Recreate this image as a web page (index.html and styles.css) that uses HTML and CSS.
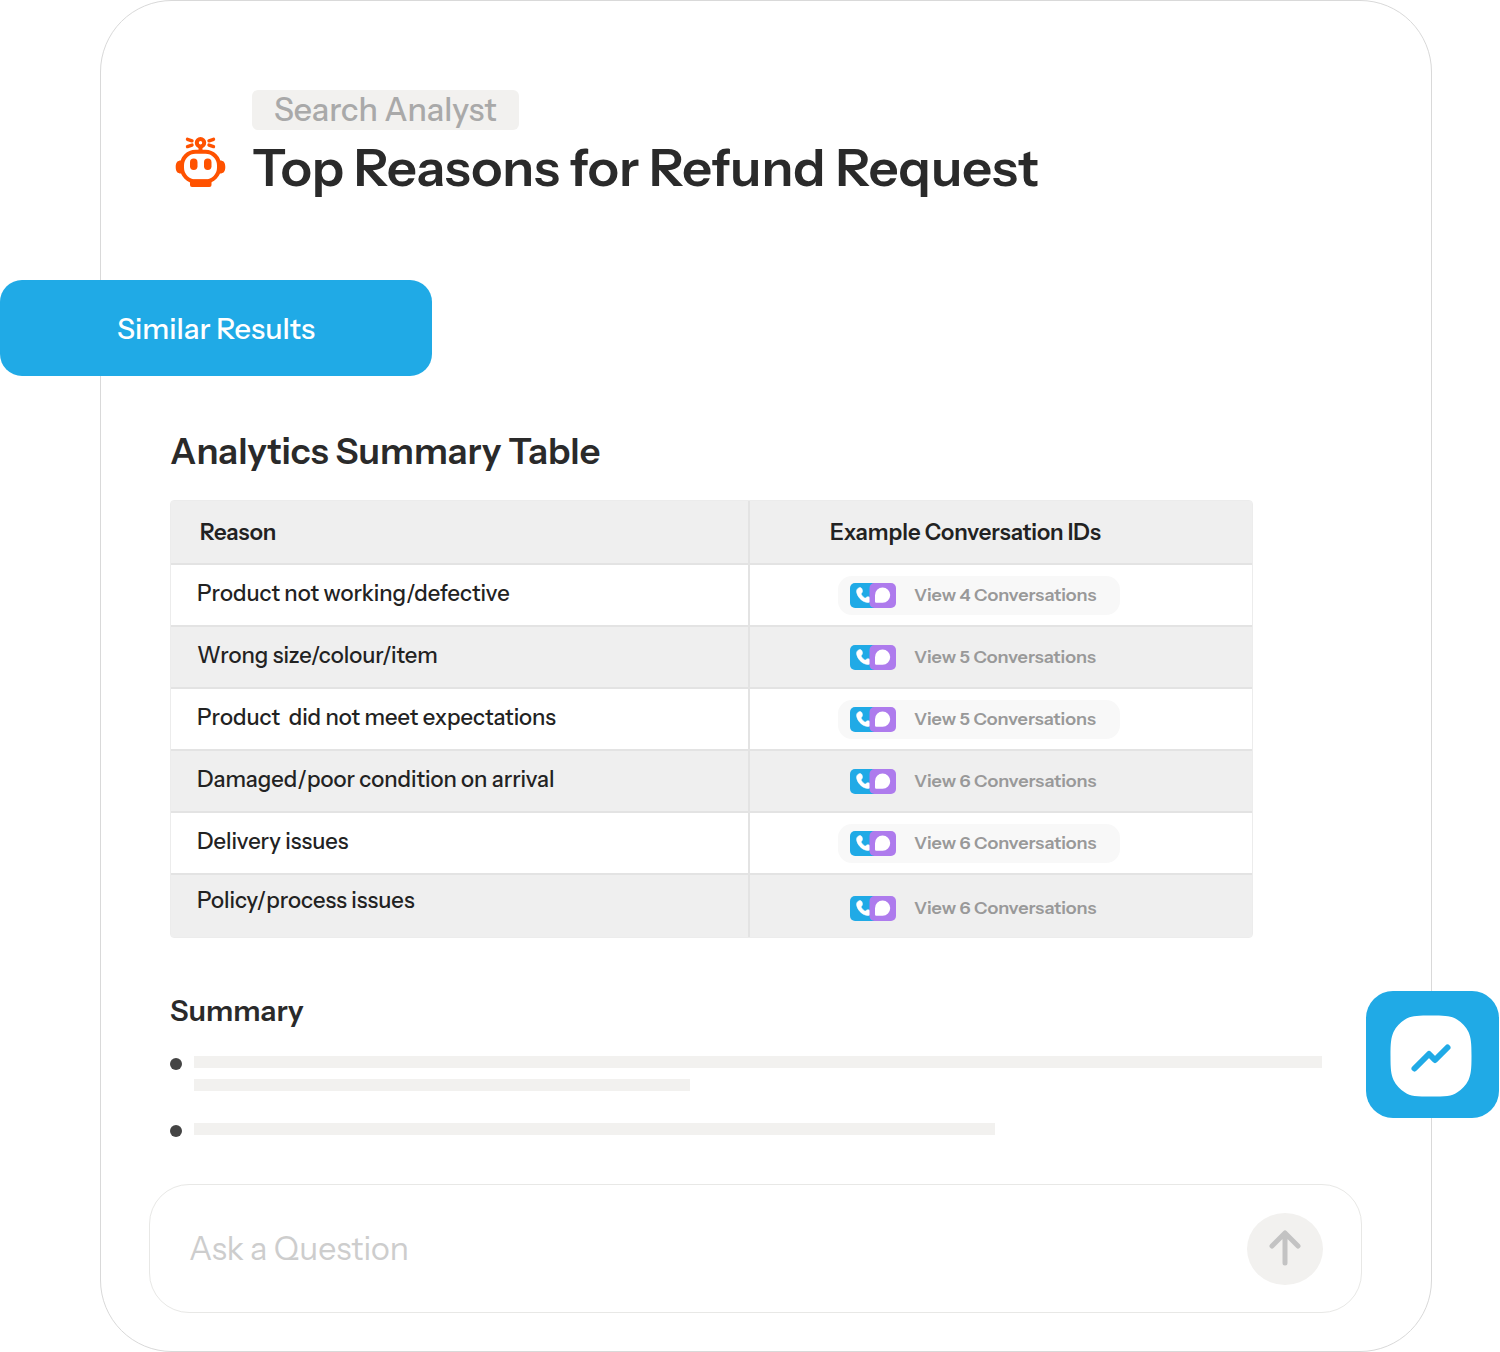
FILE: index.html
```html
<!DOCTYPE html>
<html lang="en">
<head>
<meta charset="utf-8">
<meta name="viewport" content="width=device-width, initial-scale=1">
<title>Top Reasons for Refund Request</title>
<link rel="stylesheet" href="styles.css">
</head>
<body>
<svg width="0" height="0" class="sprite" aria-hidden="true">
  <symbol id="channels" viewBox="0 0 46 25">
    <rect width="30" height="25" rx="5" fill="#20aae6"/>
    <path d="M9.300 4.700c1.500-.6 2.600.6 3 2.200.3 1.400.2 2.300-.8 3.300-.5.600-.3 1.100.1 1.800.7 1.200 1.600 2 2.700 2.700.8.500 1.300.4 1.900-.2.900-.9 2-.9 3.300-.3 2.500 1.100 2.800 2.300 1.600 3.800-1.300 1.500-3.300 1.900-5.700 1.100-4.200-1.500-7.500-5-8.600-9.200-.7-2.500.3-4.500 2.500-5.200z" fill="#fff" stroke="#fff" stroke-width=".6"/>
    <rect x="19.500" width="26.500" height="25" rx="5" fill="#ae7bed"/>
    <path d="M25 12.200a7.600 7.600 0 1 1 7.600 7.500H26.200a1.200 1.200 0 0 1-1.200-1.200z" fill="#fff"/>
  </symbol>
</svg>
<main class="panel">
  <header class="header">
    <svg class="robot" width="51" height="51" viewBox="0 0 51 51" fill="none" stroke="#ff5200" stroke-linecap="round" aria-hidden="true">
      <rect x="7" y="14.800" width="37" height="29.500" rx="13.500" stroke-width="4"/>
      <path d="M6 23.500C2.500 23.500.7 25.500.7 30S2.500 36.500 6 36.500zM45 23.500c3.500 0 5.300 2 5.300 6.500s-1.800 6.500-5.300 6.500z" fill="#ff5200" stroke="none"/>
      <rect x="15" y="21.500" width="7.500" height="11.500" rx="3.700" fill="#ff5200" stroke="none"/>
      <rect x="29" y="21.500" width="7.500" height="11.500" rx="3.700" fill="#ff5200" stroke="none"/>
      <path d="M15 42.500H36.500V48a2 2 0 0 1-2 2H17a2 2 0 0 1-2-2z" fill="#ff5200" stroke="none"/>
      <circle cx="25.500" cy="5.800" r="3.700" stroke-width="4"/>
      <path d="M25.500 10V14" stroke-width="4"/>
      <path d="M12.500 2.300L17 3.800M12.500 9.600L17 8.100M38.500 2.300L34 3.800M38.500 9.600L34 8.100" stroke-width="3.400"/>
    </svg>
    <div class="heading">
      <span class="tag">Search Analyst</span>
      <h1 class="title">Top Reasons for Refund Request</h1>
    </div>
  </header>

  <button type="button" class="similar">Similar Results</button>

  <section class="section">
    <h2 class="section-title" id="analytics">Analytics Summary Table</h2>
    <table class="table" aria-labelledby="analytics">
      <thead>
        <tr><th scope="col">Reason</th><th scope="col" class="ids">Example Conversation IDs</th></tr>
      </thead>
      <tbody>
        <tr><td>Product not working/defective</td><td><button type="button" class="view"><svg width="46" height="25" aria-hidden="true"><use href="#channels"/></svg>View 4 Conversations</button></td></tr>
        <tr><td>Wrong size/colour/item</td><td><button type="button" class="view"><svg width="46" height="25" aria-hidden="true"><use href="#channels"/></svg>View 5 Conversations</button></td></tr>
        <tr><td>Product&nbsp; did not meet expectations</td><td><button type="button" class="view"><svg width="46" height="25" aria-hidden="true"><use href="#channels"/></svg>View 5 Conversations</button></td></tr>
        <tr><td>Damaged/poor condition on arrival</td><td><button type="button" class="view"><svg width="46" height="25" aria-hidden="true"><use href="#channels"/></svg>View 6 Conversations</button></td></tr>
        <tr><td>Delivery issues</td><td><button type="button" class="view"><svg width="46" height="25" aria-hidden="true"><use href="#channels"/></svg>View 6 Conversations</button></td></tr>
        <tr><td>Policy/process issues</td><td><button type="button" class="view"><svg width="46" height="25" aria-hidden="true"><use href="#channels"/></svg>View 6 Conversations</button></td></tr>
      </tbody>
    </table>
  </section>

  <section class="section">
    <h2 class="summary-title">Summary</h2>
    <ul class="summary">
      <li><span class="bar" style="width:100%"></span><span class="bar" style="width:44%"></span></li>
      <li><span class="bar" style="width:71%"></span></li>
    </ul>
  </section>

  <form class="ask">
    <input class="ask-input" type="text" placeholder="Ask a Question" aria-label="Ask a Question">
    <button type="button" class="send" aria-label="Send">
      <svg width="34" height="38" viewBox="0 0 34 38" fill="none" stroke="#c3c3c3" stroke-width="5" stroke-linecap="round" stroke-linejoin="round" aria-hidden="true"><path d="M17 33V3M4 16L17 3L30 16"/></svg>
    </button>
  </form>

  <button type="button" class="trend" aria-label="Trends">
    <svg width="82" height="82" viewBox="0 0 82 82" fill="none" aria-hidden="true">
      <path d="M41 .5C55 .5 62 .8 67 4.500C72 7.500 76 12 78.500 17C81 23 81.500 28 81.500 41S81 59 78.500 65C76 70 72 74.500 67 77.500C62 81.200 55 81.500 41 81.500S20 81.200 15 77.500C10 74.500 6 70 3.500 65C1 59 .5 54 .5 41S1 23 3.500 17C6 12 10 7.500 15 4.500C20 .8 27 .5 41 .5z" fill="#fff"/>
      <path d="M24.500 53.500L39 39L45 45L57.500 32.500" stroke="#20aae6" stroke-width="6" stroke-linecap="round" stroke-linejoin="round"/>
    </svg>
  </button>
</main>
</body>
</html>
```
FILE: styles.css
```css
* { box-sizing: border-box; }

body {
  margin: 0;
  padding: 0 68px 0 100px;
  background: #fff;
  color: #2a2a2a;
  font-family: "Instrument Sans", Inter, "Liberation Sans", sans-serif;
}

button, input { font: inherit; }
button { border: 0; cursor: pointer; }
h1, h2 { margin: 0; font-weight: 600; }
.sprite { position: absolute; }

.panel {
  position: relative;
  padding: 89px 69px 38px 48px;
  border: 1px solid #d9d9d9;
  border-radius: 72px;
}

.header {
  display: flex;
  align-items: flex-end;
  gap: 26px;
  padding-left: 26px;
}
.robot { flex: none; margin-bottom: 10px; }
.heading {
  display: flex;
  flex-direction: column;
  align-items: flex-start;
  gap: 8px;
}
.tag {
  padding: 0 22px;
  border-radius: 6px;
  background: #f2f1ef;
  color: #a9a9a9;
  font-size: 32px;
  font-weight: 500;
  line-height: 40px;
}
.title { font-size: 52px; line-height: 60px; }

.similar {
  display: block;
  width: 432px;
  height: 96px;
  margin: 82px 0 51px -149px;
  border-radius: 22px;
  background: #20aae6;
  color: #fff;
  font-size: 29px;
  font-weight: 500;
}

.section { padding: 0 40px 0 21px; }
.section-title {
  margin-bottom: 25px;
  font-size: 36px;
  line-height: 48px;
}

.table {
  width: 94%;
  table-layout: fixed;
  border-collapse: separate;
  border-spacing: 0;
  border: 1px solid #ececec;
  border-radius: 4px;
  color: #222;
  font-size: 22px;
  font-weight: 500;
}
.table th, .table td {
  height: 62px;
  padding: 0 26px;
  border-bottom: 2px solid #e3e3e3;
  text-align: left;
}
.table th { height: 64px; padding-left: 29px; font-weight: 600; }
.table td:first-child { padding-bottom: 4px; }
.table tr > :first-child { width: 579px; border-right: 2px solid #e3e3e3; }
.table td:last-child { padding-left: 88px; }
.table .ids { padding-left: 80px; }
.table th, .table tbody tr:nth-child(even) { background: #efefef; }
.table tbody tr:last-child td { border-bottom: 0; }
.table tr:last-child td:first-child { padding-bottom: 12px; }
.table tr:last-child td:last-child { padding-top: 4px; }

.view {
  display: flex;
  align-items: center;
  gap: 18px;
  height: 39px;
  padding: 0 24px 0 12px;
  border-radius: 14px;
  background: #f8f8f8;
  color: #999;
  font-size: 18px;
  font-weight: 600;
  white-space: nowrap;
}
.table tr:nth-child(even) .view { background: transparent; }

.summary-title {
  margin: 53px 0 25px;
  font-size: 29px;
  line-height: 40px;
}
.summary {
  display: grid;
  gap: 32px;
  margin: 0 0 49px;
  padding: 0;
  list-style: none;
}
.summary li {
  position: relative;
  display: grid;
  gap: 11px;
  padding-left: 24px;
}
.summary li::before {
  content: "";
  position: absolute;
  top: 2px;
  left: 0;
  width: 12px;
  height: 12px;
  border-radius: 50%;
  background: #444;
}
.bar { height: 12px; background: #f2f1ef; }

.ask {
  display: flex;
  align-items: center;
  height: 129px;
  padding: 0 38px 0 39px;
  border: 1px solid #e8e8e6;
  border-radius: 40px;
}
.ask-input {
  flex: 1;
  min-width: 0;
  padding: 0;
  border: 0;
  outline: 0;
  background: transparent;
  color: #2a2a2a;
  font-size: 32px;
}
.ask-input::placeholder { color: #cdcdcd; opacity: 1; }
.send {
  display: grid;
  place-items: center;
  width: 76px;
  height: 72px;
  padding: 0;
  border-radius: 50%;
  background: #f2f1ef;
}

.trend {
  position: absolute;
  right: -68px;
  bottom: 233px;
  display: grid;
  place-items: center;
  width: 133px;
  height: 127px;
  padding: 2px 3px 0 0;
  border-radius: 27px;
  background: #20aae6;
}
```
